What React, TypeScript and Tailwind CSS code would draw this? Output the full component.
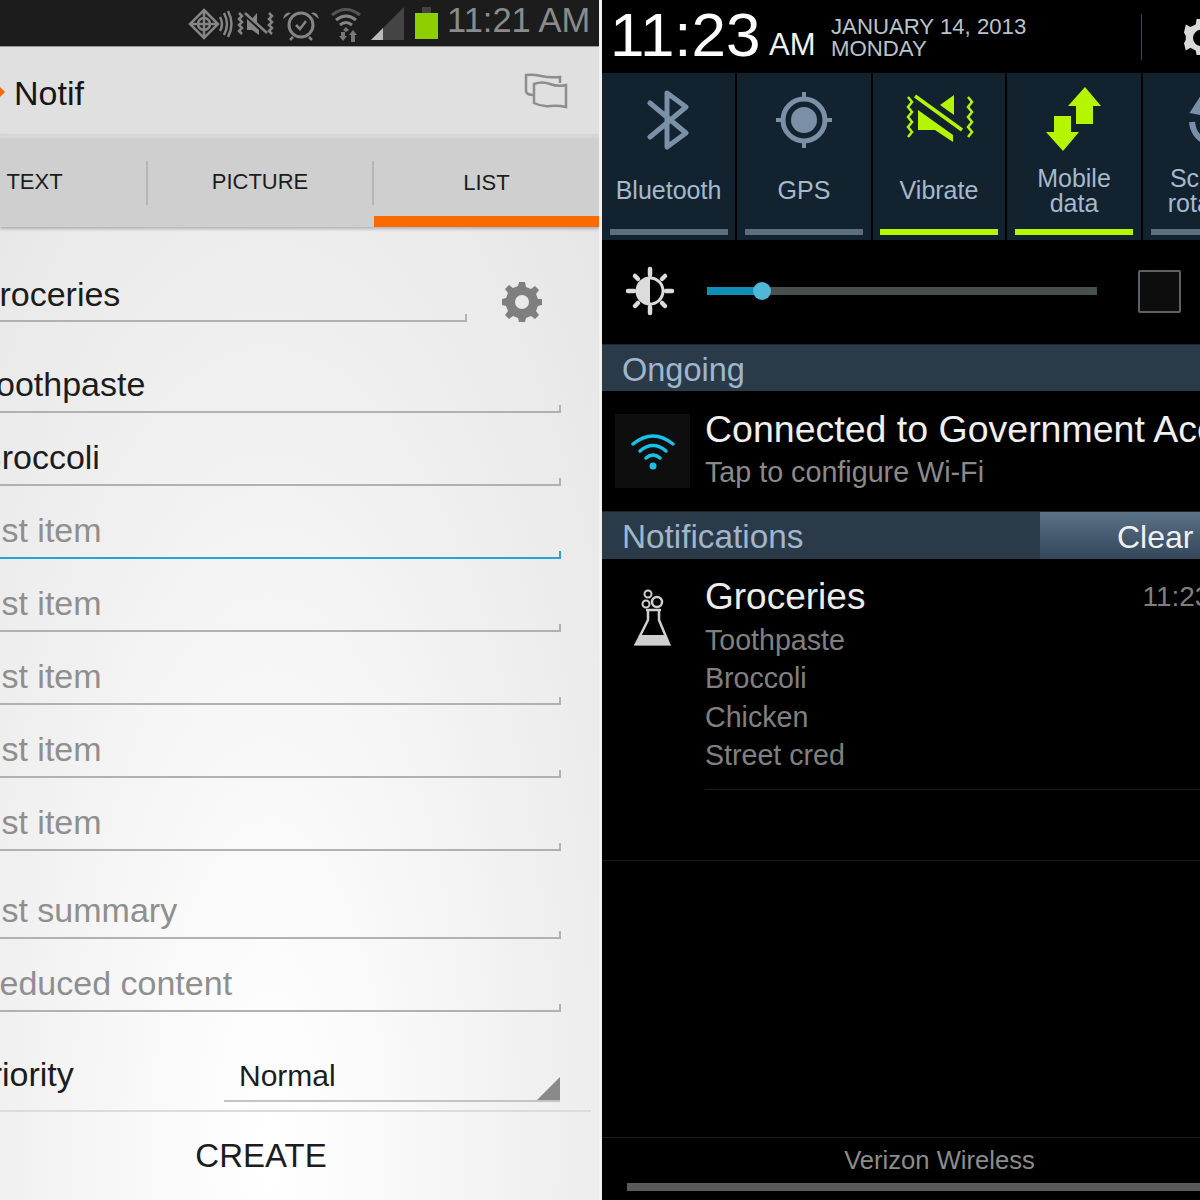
import React from "react";

const Field = ({ text, hint, focused }: { text: string; hint?: boolean; focused?: boolean }) => {
    return (
        <div className={"relative h-[73px] w-[561px] flex items-end pb-[5px] border-b-2 " + (focused ? "border-[#2ba1d3]" : "border-[#b1b1b1]")}>
            <span className={"text-[34px] leading-[44px] whitespace-nowrap " + (hint ? "ml-[-25px] text-[#8f8f8f]" : "ml-[-21px] text-[#1c1c1c]")}>{text}</span>
            <div className={"absolute right-0 bottom-0 w-[2px] h-[6px] " + (focused ? "bg-[#2ba1d3]" : "bg-[#b1b1b1]")}></div>
        </div>
    );
};

const Toggle = ({ label, on, width, children }: { label: React.ReactNode; on?: boolean; width: string; children: React.ReactNode }) => {
    return (
        <div className={"shrink-0 h-full bg-[#12232f] flex flex-col items-center " + width}>
            <div className="h-[77px] w-full flex items-end justify-center">{children}</div>
            <div className="h-[79px] pt-[2px] flex items-center justify-center text-center text-[25px] leading-[25px] text-[#a5b9cc]">{label}</div>
            <div className={"h-[6px] w-[118px] " + (on ? "bg-[#b6f500]" : "bg-[#5d6f7e]")}></div>
        </div>
    );
};

const SectionBar = ({ children }: { children: React.ReactNode }) => {
    return (
        <div className="h-[47px] bg-[#2b3a48] border-t border-[#1b2731] flex items-center pl-[20px] pt-[4px] text-[32.5px] text-[#9fb6cc] overflow-hidden">
            {children}
        </div>
    );
};

export default function App() {
    return (
        <div className="w-[1200px] h-[1200px] flex overflow-hidden bg-white font-['Liberation_Sans',sans-serif]">
            {/* Left phone: create note */}
            <div className="w-[599px] h-full shrink-0 flex flex-col overflow-hidden">
                <div className="h-[47px] shrink-0 bg-[#1c1c1c] border-b border-[#9a9a9a] flex items-center justify-end pr-[9px]">
                    <svg width="260" height="46" viewBox="0 0 260 46" className="shrink-0">
                        <g fill="none" stroke="#858585" strokeWidth="2.5">
                            {/* network globe */}
                            <path d="M21 10 L35 24 L21 38 L7 24 Z M21 10 V38 M7 24 H35" />
                            <circle cx="21" cy="24" r="6" />
                            <path d="M37 17 Q41 24 37 31 M41 13 Q47 24 41 35 M45 11 Q52 24 45 37" />
                        </g>
                        <g transform="translate(6 0)">
                            <g fill="none" stroke="#858585" strokeWidth="2.5">
                                <path d="M50 13 l3 3 -3 3 3 3 -3 3 3 3 -3 3 3 3" />
                                <path d="M80 13 l3 3 -3 3 3 3 -3 3 3 3 -3 3 3 3" />
                                <path d="M56 13 L78 33" />
                            </g>
                            <path d="M58 19 L70 30 V35 L63 30 H58 Z M68 13 V24 L63 19 Z" fill="#858585" />
                        </g>
                        <g transform="translate(8 0)">
                            <g fill="none" stroke="#858585" strokeWidth="2.5">
                                <circle cx="110" cy="25" r="12" strokeWidth="3" />
                                <path d="M105 25 l4 4 6 -8" />
                                <path d="M102 37 l-3 3 M118 37 l3 3" />
                            </g>
                            <path d="M100 13 q-6 -2 -8 6 Z M120 13 q6 -2 8 6 Z" fill="#858585" />
                        </g>
                        <g transform="translate(8 0)">
                            <g fill="none" stroke="#858585" strokeWidth="3">
                                <path d="M141 15 Q155 4 169 15" stroke="#555" />
                                <path d="M145 20 Q155 12 165 20" />
                                <path d="M149 25 Q155 20 161 25" />
                            </g>
                            <path d="M155 27 l3 3 -3 2 -3 -2 Z M150 32 v4 h-2 l4 5 4 -5 h-2 v-4 Z M160 42 v-7 h-2 l4 -5 4 5 h-2 v7 Z" fill="#777" />
                        </g>
                        {/* signal */}
                        <path d="M188 40 L221 7 V40 Z" fill="#444" />
                        <path d="M188 40 L200 28 V40 Z" fill="#bbb" />
                        {/* battery */}
                        <path d="M239 7 H248 V13 H239 Z" fill="#444" />
                        <path d="M232 13 H255 V39 H232 Z" fill="#8fce00" />
                    </svg>
                    <span className="shrink-0 ml-[4px] mt-[-5px] text-[34.5px] leading-none text-[#8b8b8b] w-[143px] text-right whitespace-nowrap">11:21 AM</span>
                </div>

                <div className="h-[87px] shrink-0 bg-[#e0e0e0] flex items-center justify-between pr-[31px]">
                    <div className="flex items-center gap-[11px]">
                        <div className="w-[10px] h-[10px] ml-[-7px] bg-[#f06a0c] rotate-45 mt-[3px]"></div>
                        <span className="text-[34px] text-[#161616] mt-[5px]">Notif</span>
                    </div>
                    <svg width="44" height="36" viewBox="0 0 44 36" fill="none" stroke="#8d8d8d" strokeWidth="2.5">
                        <path d="M2 19 V2 Q9 1 17 3 T36 4 V10" />
                        <path d="M10 11 Q18 8 26 11 T42 12 V34 Q34 32 26 33 T10 30 Z" />
                        <path d="M2 19 Q4 22 9 22" />
                    </svg>
                </div>

                <div className="h-[93px] shrink-0 bg-[#cfcfcf] border-t-4 border-[#d6d6d6] flex shadow-[0_2px_3px_rgba(0,0,0,0.25)] relative">
                    <div className="ml-[-77px] w-[225px] h-full pt-[22px] pb-[22px] border-r-2 border-transparent flex items-center justify-center text-[22px] text-[#1c1c1c]">
                        <span className="flex-1 text-center pb-[3px]">TEXT</span>
                        <div className="w-[2px] h-[44px] bg-[#b5b5b5] mr-[-2px]"></div>
                    </div>
                    <div className="w-[226px] h-full pt-[22px] pb-[22px] flex items-center text-[22px] text-[#1c1c1c]">
                        <span className="flex-1 text-center pb-[3px]">PICTURE</span>
                        <div className="w-[2px] h-[44px] bg-[#b5b5b5]"></div>
                    </div>
                    <div className="w-[225px] h-full flex flex-col text-[22px] text-[#1c1c1c]">
                        <span className="flex-1 flex items-center justify-center pt-[10px]">LIST</span>
                        <div className="h-[11px] bg-[#fb6a02]"></div>
                    </div>
                </div>

                <div className="flex-1 bg-[radial-gradient(ellipse_at_45%_95%,#ffffff_0%,#f8f8f8_30%,#ededed_70%,#e6e6e6_100%)]">
                    <div className="h-[95px] flex">
                        <div className="relative w-[467px] h-full flex items-end pb-[4px] border-b-2 border-[#b1b1b1]">
                            <span className="ml-[-27px] text-[34px] leading-[44px] text-[#1c1c1c]">Groceries</span>
                            <div className="absolute right-0 bottom-0 w-[2px] h-[6px] bg-[#b1b1b1]"></div>
                        </div>
                        <div className="ml-[35px] pt-[55px]">
                            <svg width="40" height="40" viewBox="0 0 40 40">
                                <path fill="#7f7f7f" fillRule="evenodd" d="M17 0 H23 L24 5 L29 7 L33 4 L37 8 L34 12 L36 17 L40 17 V23 L36 24 L34 29 L37 33 L33 37 L29 34 L24 36 L23 40 H17 L16 36 L11 34 L7 37 L3 33 L6 29 L4 24 L0 23 V17 L4 16 L6 11 L3 7 L7 3 L11 6 L16 4 Z M20 13 A7 7 0 1 0 20 27 A7 7 0 1 0 20 13 Z" />
                            </svg>
                        </div>
                    </div>
                    <div className="mt-[18px]">
                        <Field text="Toothpaste" />
                        <Field text="Broccoli" />
                        <Field text="List item" hint focused />
                        <Field text="List item" hint />
                        <Field text="List item" hint />
                        <Field text="List item" hint />
                        <Field text="List item" hint />
                    </div>
                    <div className="mt-[15px]">
                        <Field text="List summary" hint />
                        <Field text="Reduced content" hint />
                    </div>
                    <div className="h-[90px] flex items-end">
                        <span className="ml-[-32px] w-[256px] pb-[6px] text-[34px] leading-[44px] text-[#1c1c1c]">Priority</span>
                        <div className="relative w-[336px] h-[50px] flex items-center pl-[15px] pb-[2px] border-b-2 border-[#c4c4c4]">
                            <span className="text-[30px] text-[#1c1c1c]">Normal</span>
                            <div className="absolute right-0 bottom-0 w-[23px] h-[23px] bg-[#8a8a8a] [clip-path:polygon(100%_0,100%_100%,0_100%)]"></div>
                        </div>
                    </div>
                    <div className="mt-[8px] h-[2px] w-[591px] bg-[#dcdcdc]"></div>
                    <div className="h-[88px] flex items-center justify-center pr-[77px] text-[33px] text-[#1c1c1c]">CREATE</div>
                </div>
            </div>

            <div className="w-[3px] shrink-0 bg-[#f2f2f2]"></div>

            {/* Right phone: notification shade */}
            <div className="flex-1 h-full bg-black flex flex-col overflow-hidden">
                <div className="h-[73px] shrink-0 flex items-center pl-[8px]">
                    <span className="text-[62px] leading-none text-white w-[159px] shrink-0 mb-[3px]">11:23</span>
                    <span className="text-[31px] leading-none text-[#f2f2f2] mt-[16px] w-[62px] shrink-0">AM</span>
                    <div className="text-[22.2px] leading-[22px] text-[#b9c3cc] w-[311px] shrink-0 mt-[3px] whitespace-nowrap">
                        <div>JANUARY 14, 2013</div>
                        <div>MONDAY</div>
                    </div>
                    <div className="w-[1px] h-[46px] bg-[#3c4650] shrink-0 ml-[-1px]"></div>
                    <svg width="36" height="40" viewBox="0 0 40 44" className="shrink-0 ml-[42px]">
                        <path fill="#d9d9d9" fillRule="evenodd" d="M14 2 H24 L25 8 L31 11 L36 8 L40 17 L36 21 V25 L40 29 L36 37 L31 34 L25 37 L24 42 H14 L13 37 L7 34 L2 37 L0 29 L2 25 V21 L0 17 L2 8 L7 11 L13 8 Z M19 14 A9 9 0 1 0 19 32 A9 9 0 1 0 19 14 Z" />
                    </svg>
                </div>

                <div className="h-[167px] shrink-0 flex gap-[2px]">
                    <Toggle label="Bluetooth" width="w-[133px]">
                        <svg width="44" height="60" viewBox="0 0 44 60" fill="none" stroke="#7b90a6" strokeWidth="5" strokeLinejoin="round" strokeLinecap="round">
                            <path d="M3 13 L39 43 L20 57 V3 L39 17 L3 47" />
                        </svg>
                    </Toggle>
                    <Toggle label="GPS" width="w-[134px]">
                        <svg width="56" height="56" viewBox="0 0 56 56" className="mb-[2px]">
                            <circle cx="28" cy="28" r="21" fill="none" stroke="#7b90a6" strokeWidth="5" />
                            <circle cx="28" cy="28" r="13" fill="#7b90a6" />
                            <path d="M28 0 V6 M28 50 V56 M0 28 H6 M50 28 H56" stroke="#7b90a6" strokeWidth="4" />
                        </svg>
                    </Toggle>
                    <Toggle label="Vibrate" on width="w-[132px]">
                        <svg width="68" height="56" viewBox="0 0 68 56" className="ml-[2px] mb-[2px]">
                            <path d="M2 5 l4 5 -4 5 4 5 -4 5 4 5 -4 5 4 5 -4 5" fill="none" stroke="#b6f500" strokeWidth="2.5" />
                            <path d="M62 5 l4 5 -4 5 4 5 -4 5 4 5 -4 5 4 5 -4 5" fill="none" stroke="#b6f500" strokeWidth="2.5" />
                            <path d="M9 4 L56 38" stroke="#b6f500" strokeWidth="3.5" />
                            <path d="M12 18 L47 43 V50 L29 38 H12 Z M48 3 V23 L34 13 Z" fill="#b6f500" />
                        </svg>
                    </Toggle>
                    <Toggle label={<span>Mobile<br />data</span>} on width="w-[134px]">
                        <svg width="56" height="64" viewBox="0 0 56 64" className="mb-[-1px]">
                            <path d="M39 0 L55 19 H47 V37 H30 V19 H22 Z M8 29 H25 V45 H33 L17 64 L0 45 H8 Z" fill="#b6f500" />
                        </svg>
                    </Toggle>
                    <Toggle label={<span>Screen<br />rotation</span>} width="w-[133px]">
                        <svg width="56" height="56" viewBox="0 0 56 56" fill="none" stroke="#7b90a6" strokeWidth="6">
                            <path d="M10 28 A24 24 0 0 0 24 48" />
                            <path d="M18.5 2 V21 L7.5 19 Z" fill="#7b90a6" stroke="none" />
                        </svg>
                    </Toggle>
                </div>

                <div className="h-[104px] shrink-0 flex items-center pl-[22px] pb-[2px]">
                    <svg width="50" height="50" viewBox="0 0 50 50" className="shrink-0 ml-[1px] mr-[-1px]">
                        <circle cx="25" cy="25" r="13" fill="none" stroke="#dcdcdc" strokeWidth="3" />
                        <path d="M25 12 A13 13 0 0 0 25 38 Z" fill="#dcdcdc" />
                        <path d="M25 3 V9 M25 41 V47 M3 25 H9 M41 25 H47 M10 10 L13 13 M37 37 L40 40 M40 10 L37 13 M13 37 L10 40" stroke="#dcdcdc" strokeWidth="4.5" strokeLinecap="round" />
                    </svg>
                    <div className="relative w-[390px] h-[8px] bg-[#48504f] ml-[33px] shrink-0">
                        <div className="h-full w-[55px] bg-[#0f8fb5]"></div>
                        <div className="absolute left-[46px] top-[-5px] w-[18px] h-[18px] rounded-full bg-[#4fb8d6]"></div>
                    </div>
                    <div className="ml-[41px] w-[43px] h-[43px] shrink-0 rounded-[2px] bg-[#0d0d0d] border-2 border-[#5c6164]"></div>
                </div>

                <SectionBar>Ongoing</SectionBar>

                <div className="h-[120px] shrink-0 flex items-center pl-[13px]">
                    <div className="w-[75px] h-[74px] shrink-0 bg-[#0e0e0e] flex items-center justify-center">
                        <svg width="46" height="40" viewBox="0 0 46 40" fill="none" stroke="#19c1e8" strokeWidth="3.5" strokeLinecap="round">
                            <path d="M3 13 Q23 -3 43 13" />
                            <path d="M10 20 Q23 9 36 20" />
                            <path d="M16 27 Q23 21 30 27" />
                            <circle cx="23" cy="35" r="3.5" fill="#19c1e8" stroke="none" />
                        </svg>
                    </div>
                    <div className="ml-[15px] whitespace-nowrap pb-[2px]">
                        <div className="text-[37.5px] leading-[44px] text-[#f0f0f0]">Connected to Government Access</div>
                        <div className="text-[28.7px] leading-[43px] text-[#8a8a8a]">Tap to configure Wi-Fi</div>
                    </div>
                </div>

                <div className="h-[48px] shrink-0 bg-[#2b3a48] border-t border-[#1b2731] flex items-stretch overflow-hidden">
                    <div className="w-[438px] shrink-0 pl-[20px] pt-[3px] flex items-center text-[33.3px] text-[#9fb6cc]">Notifications</div>
                    <div className="w-[300px] shrink-0 pl-[77px] pt-[2px] flex items-center text-[32px] text-[#f0f0f0] whitespace-nowrap bg-gradient-to-b from-[#5c7287] to-[#33465a]">Clear all</div>
                </div>

                <div className="h-[230px] shrink-0 flex relative">
                    <div className="w-[103px] shrink-0 pl-[31px] pt-[30px]">
                        <svg width="40" height="60" viewBox="0 0 40 60">
                            <g fill="none" stroke="#cfcfcf" strokeWidth="2">
                                <circle cx="15" cy="5" r="3.5" />
                                <circle cx="13" cy="15" r="3.5" />
                                <circle cx="24" cy="13" r="5" strokeWidth="2.5" />
                                <path d="M13 21 H28 M15 21 V31 L3 55 H36 L26 31 V21" strokeWidth="2.5" />
                            </g>
                            <path d="M7.5 46 H31.5 L38 56.5 H1 Z" fill="#cfcfcf" />
                        </svg>
                    </div>
                    <div className="flex-1 pt-[13px]">
                        <div className="flex">
                            <span className="text-[37px] leading-[50px] text-[#ededed]">Groceries</span>
                            <span className="ml-[277px] text-[28px] leading-[50px] text-[#7f7f7f] whitespace-nowrap">11:23 AM</span>
                        </div>
                        <div className="text-[28.6px] leading-[38.4px] text-[#808080] mt-[-1px]">
                            <div>Toothpaste</div>
                            <div>Broccoli</div>
                            <div>Chicken</div>
                            <div>Street cred</div>
                        </div>
                        <div className="h-[1px] bg-[#1d1d1d] mt-[14px]"></div>
                    </div>
                </div>

                <div className="h-[72px] shrink-0 border-b border-[#0f181f]"></div>
                <div className="flex-1"></div>

                <div className="h-[63px] shrink-0 border-t border-[#1c1c1c] flex flex-col">
                    <div className="h-[45px] w-[675px] flex items-center justify-center text-[25.6px] text-[#8c8c8c]">Verizon Wireless</div>
                    <div className="h-[8px] ml-[25px] bg-[#5a5a5a]"></div>
                </div>
            </div>
        </div>
    );
}
